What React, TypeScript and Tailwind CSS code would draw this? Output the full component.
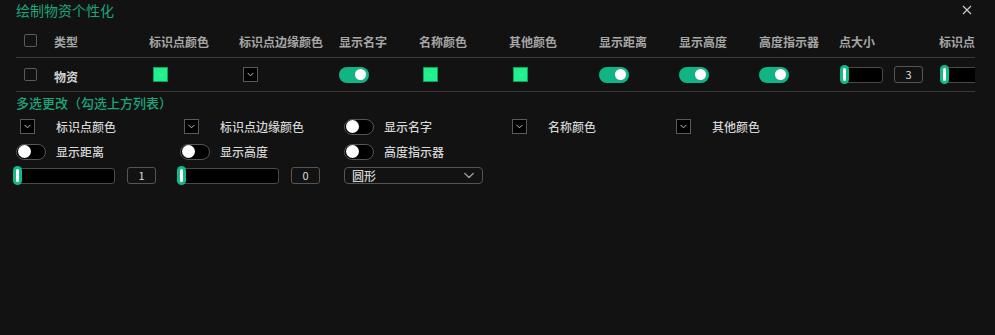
import React from "react";

const Chevron = ({ color = "#d0d0d0", w = 8, h = 5 }: { color?: string; w?: number; h?: number }) => (
  <svg width={w} height={h} viewBox="0 0 8 5" fill="none">
    <path d="M1 1l3 3 3-3" stroke={color} strokeWidth="1" strokeLinecap="round" strokeLinejoin="round" />
  </svg>
);

const Checkbox = () => <div className="w-[13px] h-[13px] border border-[#5a5a5a] rounded-[2px]" />;

const Swatch = () => (
  <div className="ml-[4px] w-[15px] h-[15px] bg-[#1ef08b] border border-[#0f9e60] flex items-center justify-center">
    <Chevron color="#7fdcb0" w={6} h={4} />
  </div>
);

const DropBox = () => (
  <div className="w-[15px] h-[15px] bg-black border border-[#5a5a5a] flex items-center justify-center">
    <Chevron color="#d8d8d8" w={7} h={5} />
  </div>
);

const ToggleOn = () => (
  <div className="w-[30px] h-[16px] rounded-full bg-[#12b486] flex items-center justify-end pr-[3px]">
    <div className="w-[11px] h-[11px] rounded-full bg-white" />
  </div>
);

const ToggleOff = () => (
  <div className="w-[30px] h-[16px] rounded-full bg-black border border-[#555] flex items-center pl-[1px]">
    <div className="w-[13px] h-[13px] rounded-full bg-white" />
  </div>
);

const Thumb = () => (
  <div className="absolute left-0 top-0 w-[9px] h-[19px] rounded-full bg-[#14b98a] flex items-center justify-center">
    <div className="w-[3px] h-[13px] rounded-full bg-white" />
  </div>
);

const Slider = ({ wide }: { wide?: boolean }) => (
  <div className={wide ? "relative w-[102px] h-[19px] flex items-center" : "relative w-[43px] h-[19px] flex items-center"}>
    <div className="w-full h-[16px] bg-black border border-[#4a4a4a] rounded-[3px]" />
    <Thumb />
  </div>
);

const NumBox = ({ v }: { v: string }) => (
  <div className="w-[29px] h-[17px] border border-[#555] rounded-[3px] text-[11px] text-[#dcdcdc] flex items-center justify-center">
    {v}
  </div>
);

const H = ({ children }: { children: React.ReactNode }) => (
  <span className="text-[12px] font-bold text-[#a6a6a6] whitespace-nowrap">{children}</span>
);

const Label = ({ children }: { children: React.ReactNode }) => (
  <span className="ml-[10px] text-[12px] font-medium text-[#d4d4d4] whitespace-nowrap">{children}</span>
);

export default function App() {
  return (
    <div className="w-[995px] h-[335px] bg-[#121212] overflow-hidden font-['Noto_Sans_CJK_SC','Noto_Sans',sans-serif]">
      <div className="flex items-center justify-between h-[20px] pl-[16px] pr-[23px]">
        <span className="text-[14px] leading-[18px] text-[#1ca57b]">绘制物资个性化</span>
        <svg width="10" height="10" viewBox="0 0 10 10">
          <path d="M1 1l8 8M9 1l-8 8" stroke="#cfcfcf" strokeWidth="1.1" />
        </svg>
      </div>

      <div className="ml-[16px] mt-[8px] w-[959px] overflow-hidden">
        <div className="flex w-max h-[30px] pb-[5px] border-b border-[#3a3a3a] items-center">
          <div className="w-[30px] pl-[8px] flex items-center"><Checkbox /></div>
          <div className="w-[95px] pl-[8px]"><H>类型</H></div>
          <div className="w-[90px] pl-[8px]"><H>标识点颜色</H></div>
          <div className="w-[100px] pl-[8px]"><H>标识点边缘颜色</H></div>
          <div className="w-[80px] pl-[8px]"><H>显示名字</H></div>
          <div className="w-[90px] pl-[8px]"><H>名称颜色</H></div>
          <div className="w-[90px] pl-[8px]"><H>其他颜色</H></div>
          <div className="w-[80px] pl-[8px]"><H>显示距离</H></div>
          <div className="w-[80px] pl-[8px]"><H>显示高度</H></div>
          <div className="w-[80px] pl-[8px]"><H>高度指示器</H></div>
          <div className="w-[100px] pl-[8px]"><H>点大小</H></div>
          <div className="w-[130px] pl-[8px]"><H>标识点边缘宽度</H></div>
        </div>
        <div className="flex w-max h-[34px] border-b border-[#3a3a3a] items-center">
          <div className="w-[30px] pl-[8px] flex items-center"><Checkbox /></div>
          <div className="w-[95px] pl-[8px]"><span className="text-[12px] font-bold text-[#d2d2d2]">物资</span></div>
          <div className="w-[90px] pl-[8px] flex items-center"><Swatch /></div>
          <div className="w-[100px] pl-[12px] flex items-center"><DropBox /></div>
          <div className="w-[80px] pl-[8px] flex items-center"><ToggleOn /></div>
          <div className="w-[90px] pl-[8px] flex items-center"><Swatch /></div>
          <div className="w-[90px] pl-[8px] flex items-center"><Swatch /></div>
          <div className="w-[80px] pl-[8px] flex items-center"><ToggleOn /></div>
          <div className="w-[80px] pl-[8px] flex items-center"><ToggleOn /></div>
          <div className="w-[80px] pl-[8px] flex items-center"><ToggleOn /></div>
          <div className="w-[100px] pl-[9px] flex items-center gap-[11px]"><Slider /><NumBox v="3" /></div>
          <div className="w-[130px] pl-[9px] flex items-center gap-[11px]"><Slider /></div>
        </div>
      </div>

      <div className="pl-[16px] h-[22px] leading-[22px] text-[13px] font-medium text-[#1ca57b]">多选更改（勾选上方列表）</div>

      <div className="pl-[16px] flex flex-col">
        <div className="flex h-[25px] items-center">
          <div className="w-[164px] flex items-center"><div className="w-[30px] pl-[4px]"><DropBox /></div><Label>标识点颜色</Label></div>
          <div className="w-[164px] flex items-center"><div className="w-[30px] pl-[4px]"><DropBox /></div><Label>标识点边缘颜色</Label></div>
          <div className="w-[164px] flex items-center"><div className="w-[30px]"><ToggleOff /></div><Label>显示名字</Label></div>
          <div className="w-[164px] flex items-center"><div className="w-[30px] pl-[4px]"><DropBox /></div><Label>名称颜色</Label></div>
          <div className="w-[164px] flex items-center"><div className="w-[30px] pl-[4px]"><DropBox /></div><Label>其他颜色</Label></div>
        </div>
        <div className="flex h-[25px] items-center">
          <div className="w-[164px] flex items-center"><div className="w-[30px]"><ToggleOff /></div><Label>显示距离</Label></div>
          <div className="w-[164px] flex items-center"><div className="w-[30px]"><ToggleOff /></div><Label>显示高度</Label></div>
          <div className="w-[164px] flex items-center"><div className="w-[30px]"><ToggleOff /></div><Label>高度指示器</Label></div>
        </div>
        <div className="flex h-[23px] items-center">
          <div className="w-[164px] -ml-[3px] flex items-center gap-[12px]"><Slider wide /><NumBox v="1" /></div>
          <div className="w-[167px] flex items-center gap-[12px]"><Slider wide /><NumBox v="0" /></div>
          <div className="w-[139px] h-[17px] border border-[#555] rounded-[4px] flex items-center justify-between pl-[7px] pr-[7px]">
            <span className="text-[12px] font-medium text-[#d4d4d4]">圆形</span>
            <Chevron color="#9a9a9a" w={12} h={7} />
          </div>
        </div>
      </div>
    </div>
  );
}
